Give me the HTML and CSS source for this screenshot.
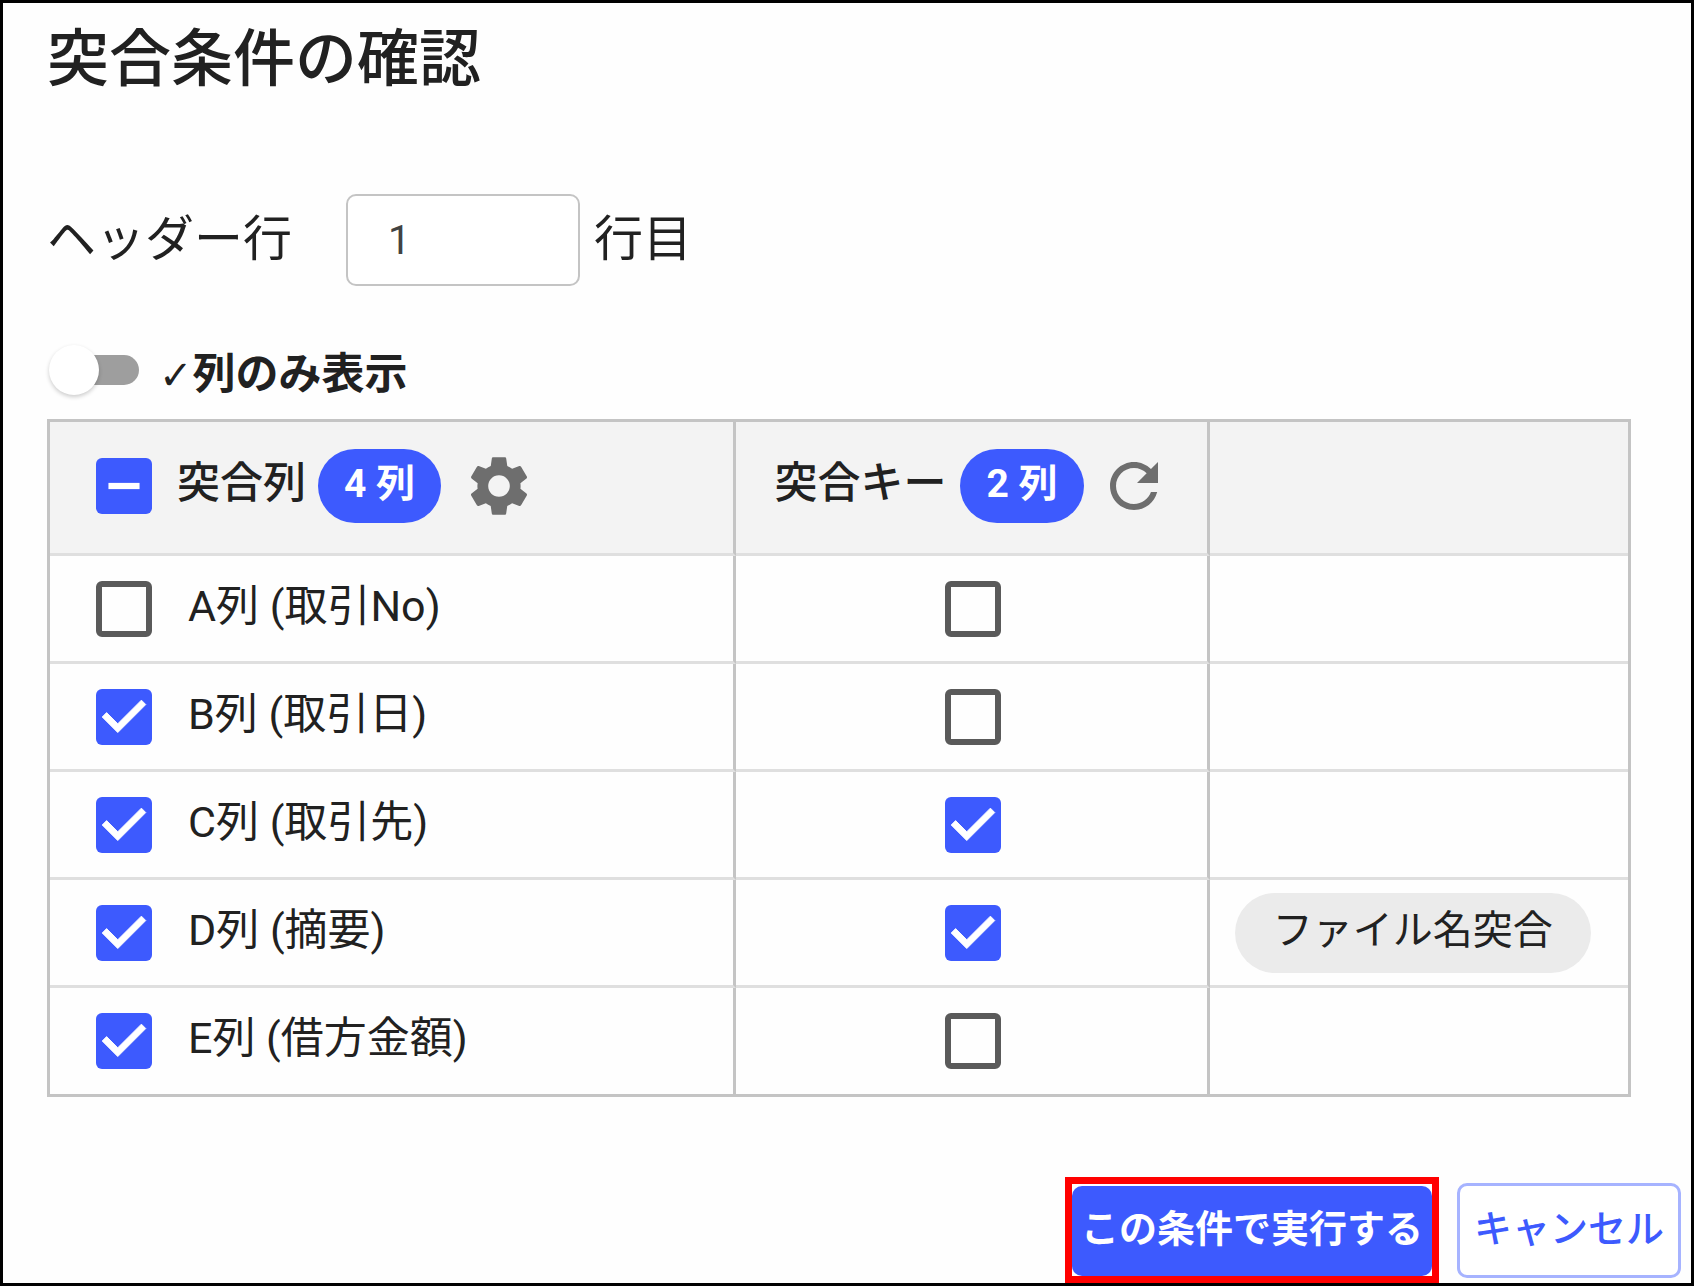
FILE: index.html
```html
<!DOCTYPE html>
<html lang="ja">
<head>
    <meta charset="UTF-8">
    <meta name="viewport" content="width=device-width, initial-scale=1.0">
    <title>突合条件の確認</title>
    <link rel="stylesheet" href="styles.css">
</head>
<body>
    <main class="dialog">
        <h1 class="dialog-title">突合条件の確認</h1>

        <div class="header-row">
            <label for="header-line">ヘッダー行</label>
            <input type="text" id="header-line" class="line-input" inputmode="numeric" value="1">
            <span>行目</span>
        </div>

        <div class="toggle-row">
            <input type="checkbox" id="only-checked" class="toggle">
            <label for="only-checked"><span class="tick">✓</span>列のみ表示</label>
        </div>

        <table class="columns-table">
            <thead>
                <tr>
                    <th class="col-name">
                        <div class="head-cell">
                            <input type="checkbox" id="check-all" class="check">
                            <label for="check-all">突合列</label>
                            <span class="badge">4 列</span>
                            <button type="button" class="icon-btn" aria-label="設定">
                                <svg viewBox="0 0 24 24"><path d="M19.14 12.94c.04-.3.06-.61.06-.94 0-.32-.02-.64-.07-.94l2.03-1.58c.18-.14.23-.41.12-.61l-1.92-3.32c-.12-.22-.37-.29-.59-.22l-2.39.96c-.5-.38-1.03-.7-1.62-.94l-.36-2.54c-.04-.24-.24-.41-.48-.41h-3.84c-.24 0-.43.17-.47.41l-.36 2.54c-.59.24-1.13.57-1.62.94l-2.39-.96c-.22-.08-.47 0-.59.22L2.74 8.87c-.12.21-.08.47.12.61l2.03 1.58c-.05.3-.09.63-.09.94s.02.64.07.94l-2.03 1.58c-.18.14-.23.41-.12.61l1.92 3.32c.12.22.37.29.59.22l2.39-.96c.5.38 1.03.7 1.62.94l.36 2.54c.05.24.24.41.48.41h3.84c.24 0 .44-.17.47-.41l.36-2.54c.59-.24 1.13-.56 1.62-.94l2.39.96c.22.08.47 0 .59-.22l1.92-3.32c.12-.22.07-.47-.12-.61l-2.01-1.58zM12 15.6c-1.98 0-3.6-1.62-3.6-3.6s1.62-3.6 3.6-3.6 3.6 1.62 3.6 3.6-1.62 3.6-3.6 3.6z"/></svg>
                            </button>
                        </div>
                    </th>
                    <th class="col-key">
                        <div class="head-cell key-head">
                            <span class="key-title">突合キー</span>
                            <span class="badge">2 列</span>
                            <button type="button" class="icon-btn" aria-label="リセット">
                                <svg viewBox="0 0 24 24"><path d="M17.65 6.35C16.2 4.9 14.21 4 12 4c-4.42 0-7.99 3.58-7.99 8s3.57 8 7.99 8c3.73 0 6.84-2.55 7.73-6h-2.08c-.82 2.33-3.04 4-5.65 4-3.31 0-6-2.69-6-6s2.69-6 6-6c1.66 0 3.14.69 4.22 1.78L13 11h7V4l-2.35 2.35z"/></svg>
                            </button>
                        </div>
                    </th>
                    <th></th>
                </tr>
            </thead>
            <tbody>
                <tr>
                    <td>
                        <div class="name-cell">
                            <input type="checkbox" id="col-a" class="check">
                            <label for="col-a">A列 (取引No)</label>
                        </div>
                    </td>
                    <td class="key-cell"><input type="checkbox" class="check" aria-label="A列 突合キー"></td>
                    <td></td>
                </tr>
                <tr>
                    <td>
                        <div class="name-cell">
                            <input type="checkbox" id="col-b" class="check" checked>
                            <label for="col-b">B列 (取引日)</label>
                        </div>
                    </td>
                    <td class="key-cell"><input type="checkbox" class="check" aria-label="B列 突合キー"></td>
                    <td></td>
                </tr>
                <tr>
                    <td>
                        <div class="name-cell">
                            <input type="checkbox" id="col-c" class="check" checked>
                            <label for="col-c">C列 (取引先)</label>
                        </div>
                    </td>
                    <td class="key-cell"><input type="checkbox" class="check" aria-label="C列 突合キー" checked></td>
                    <td></td>
                </tr>
                <tr>
                    <td>
                        <div class="name-cell">
                            <input type="checkbox" id="col-d" class="check" checked>
                            <label for="col-d">D列 (摘要)</label>
                        </div>
                    </td>
                    <td class="key-cell"><input type="checkbox" class="check" aria-label="D列 突合キー" checked></td>
                    <td class="chip-cell"><span class="chip">ファイル名突合</span></td>
                </tr>
                <tr>
                    <td>
                        <div class="name-cell">
                            <input type="checkbox" id="col-e" class="check" checked>
                            <label for="col-e">E列 (借方金額)</label>
                        </div>
                    </td>
                    <td class="key-cell"><input type="checkbox" class="check" aria-label="E列 突合キー"></td>
                    <td></td>
                </tr>
            </tbody>
        </table>

        <div class="actions">
            <div class="highlight">
                <button type="button" class="btn btn-primary">この条件で実行する</button>
            </div>
            <button type="button" class="btn btn-cancel">キャンセル</button>
        </div>
    </main>

    <script>
        document.getElementById('check-all').indeterminate = true;
    </script>
</body>
</html>
```
FILE: styles.css
```css
* {
    box-sizing: border-box;
}

body {
    margin: 0;
    color: #212121;
    background-color: #fefefe;
    font-family: Roboto, "Noto Sans CJK JP", sans-serif;
    font-size: 43px;
}

button,
input {
    font-family: inherit;
    margin: 0;
}

.dialog {
    display: flex;
    flex-direction: column;
    min-height: 100vh;
    border: 3px solid #000;
    padding: 24px 0 0;
}

.dialog-title {
    margin: 0 44px;
    font-size: 62px;
    font-weight: 500;
    line-height: 66px;
}

/* Header line number */
.header-row {
    display: flex;
    align-items: center;
    margin: 101px 44px 0;
    font-size: 49px;
    line-height: 92px;
}

.line-input {
    width: 234px;
    height: 92px;
    margin-left: 54px;
    margin-right: 14px;
    padding: 0 40px;
    border: 2px solid #c4c4c4;
    border-radius: 10px;
    background-color: #fff;
    color: #424242;
    font-size: 40px;
}

/* Switch */
.toggle-row {
    display: flex;
    align-items: center;
    gap: 20px;
    height: 60px;
    margin: 54px 44px 0;
    font-weight: 700;
}

.toggle {
    appearance: none;
    position: relative;
    width: 92px;
    height: 50px;
    cursor: pointer;
}

.toggle::before {
    content: "";
    position: absolute;
    right: 0;
    top: 10px;
    width: 67px;
    height: 30px;
    border-radius: 15px;
    background-color: #9e9e9e;
}

.toggle::after {
    content: "";
    position: absolute;
    left: 2px;
    top: 0;
    width: 50px;
    height: 50px;
    border-radius: 50%;
    background-color: #fff;
    box-shadow: 0 2px 4px rgba(0, 0, 0, 0.2);
}

.toggle:checked::after {
    left: 42px;
}

.tick {
    font-family: "DejaVu Sans", sans-serif;
    font-size: 40px;
    line-height: 43px;
}

/* Table */
.columns-table {
    margin: 19px 60px 0 44px;
    border: 3px solid #c4c4c4;
    border-collapse: separate;
    border-spacing: 0;
    table-layout: fixed;
}

.columns-table th,
.columns-table td {
    padding: 0;
    height: 108px;
    border-right: 3px solid #c4c4c4;
    border-bottom: 3px solid #dfdfdf;
    text-align: left;
}

.columns-table th {
    height: 134px;
    padding-bottom: 4px;
    background-color: #f3f3f3;
    font-weight: 500;
}

.columns-table th:last-child,
.columns-table td:last-child {
    border-right: none;
}

.columns-table tbody tr:last-child td {
    height: 106px;
    border-bottom: none;
}

.columns-table label,
.key-title {
    padding-bottom: 14px;
}

.col-name {
    width: 43.5%;
}

.col-key {
    width: 30%;
}

.head-cell {
    display: flex;
    align-items: center;
    padding-left: 46px;
}

.head-cell .check {
    margin-right: 25px;
}

.key-head {
    padding-left: 38px;
}

.badge {
    margin: 0 22px 0 12px;
    padding: 0 26px 4px;
    border-radius: 37px;
    background-color: #3d5afe;
    color: #fff;
    font-size: 39px;
    font-weight: 700;
    line-height: 70px;
}

.key-head .badge {
    margin: 0 14px;
}

.icon-btn {
    display: flex;
    padding: 0;
    border: none;
    background: none;
    cursor: pointer;
}

.icon-btn svg {
    width: 72px;
    height: 72px;
    fill: #6e6e6e;
}

.name-cell {
    display: flex;
    align-items: center;
    gap: 36px;
    padding-left: 46px;
}

.columns-table .key-cell {
    padding-left: 2px;
    text-align: center;
}

.check {
    appearance: none;
    flex-shrink: 0;
    width: 56px;
    height: 56px;
    border: 6px solid #5a5a5a;
    border-radius: 6px;
    vertical-align: middle;
    cursor: pointer;
}

.check:checked,
.check:indeterminate {
    border: none;
    background: #3d5afe center / 100% no-repeat;
}

.check:checked {
    background-image: url("data:image/svg+xml,%3Csvg xmlns='http://www.w3.org/2000/svg' viewBox='3 3 18 18'%3E%3Cpath fill='%23fff' stroke='%23fff' stroke-width='.3' d='M10 17l-5-5 1.41-1.41L10 14.17l7.59-7.59L19 8z'/%3E%3C/svg%3E");
}

.check:indeterminate {
    background-image: url("data:image/svg+xml,%3Csvg xmlns='http://www.w3.org/2000/svg' viewBox='3 3 18 18'%3E%3Cpath fill='%23fff' d='M7 11h10v2H7z'/%3E%3C/svg%3E");
}

.columns-table .chip-cell {
    padding-left: 25px;
}

.chip {
    display: inline-block;
    padding: 0 38px 4px;
    border-radius: 40px;
    background-color: #ebebeb;
    font-size: 40px;
    line-height: 76px;
    vertical-align: middle;
    white-space: nowrap;
}

/* Buttons */
.actions {
    display: flex;
    justify-content: flex-end;
    align-items: center;
    gap: 18px;
    margin-top: auto;
    padding-right: 10px;
}

.highlight {
    padding: 2px 0 0;
    border: 7px solid #f00;
}

.btn {
    display: block;
    padding: 0 14px 10px;
    border-radius: 10px;
    font-size: 38px;
    cursor: pointer;
}

.btn-primary {
    height: 90px;
    padding: 0 9px 12px;
    border: none;
    background-color: #3d5afe;
    color: #fff;
    font-weight: 700;
}

.btn-cancel {
    height: 95px;
    border: 3px solid #a6b3ff;
    background-color: #fff;
    color: #3d5afe;
    font-weight: 500;
}
```
